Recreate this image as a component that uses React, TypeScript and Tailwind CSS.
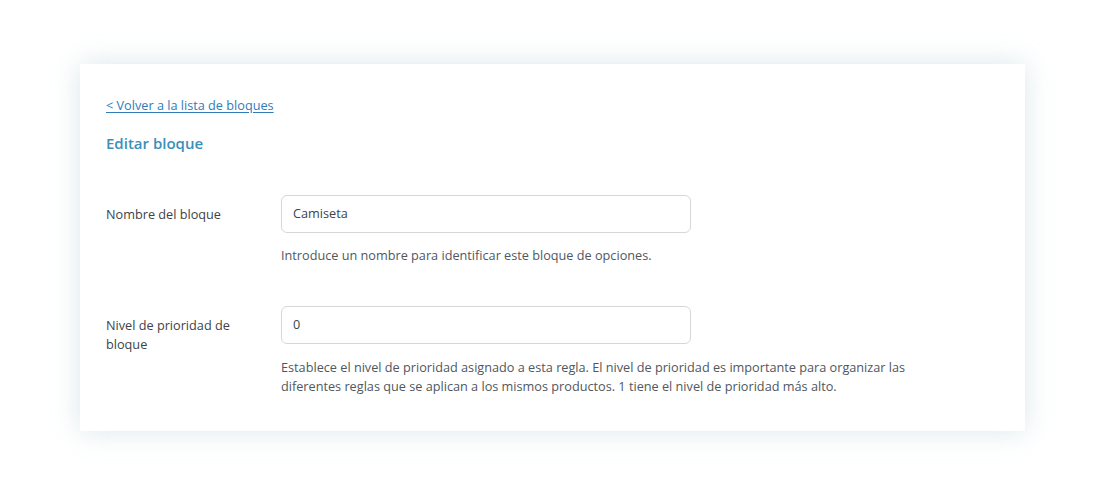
export default function App() {
  return (
    <div className="w-[1106px] h-[494px] bg-white pt-[64px] pl-[80px] font-['Open_Sans',sans-serif]">
      <div className="w-[945px] h-[367px] bg-white shadow-[0_0_26px_rgba(140,180,195,0.32)] pl-[26px] pt-[28px]">
        <a href="#" className="text-[12.7px] leading-[18px] text-[#2f7cbb] underline underline-offset-2">
          &lt; Volver a la lista de bloques
        </a>
        <h2 className="mt-[17px] text-[15px] leading-[20px] font-semibold text-[#3a90b8]">Editar bloque</h2>

        <div className="mt-[42px] flex">
          <div className="w-[175px] pt-[10px] text-[12.7px] leading-[19px] text-[#3c434a]">Nombre del bloque</div>
          <div>
            <div className="w-[410px] h-[38px] rounded-[6px] border border-[#d5d7da] flex items-center px-[11px] text-[12.7px] text-[#3c434a]">
              Camiseta
            </div>
            <p className="mt-[13px] text-[12.7px] leading-[19px] text-[#50575e]">
              Introduce un nombre para identificar este bloque de opciones.
            </p>
          </div>
        </div>

        <div className="mt-[41px] flex">
          <div className="w-[175px] pt-[10px] text-[12.7px] leading-[19px] text-[#3c434a] pr-[20px]">
            Nivel de prioridad de bloque
          </div>
          <div>
            <div className="w-[410px] h-[38px] rounded-[6px] border border-[#d5d7da] flex items-center px-[11px] text-[12.7px] text-[#3c434a]">
              0
            </div>
            <p className="mt-[14px] w-[640px] text-[12.7px] leading-[19px] text-[#50575e]">
              Establece el nivel de prioridad asignado a esta regla. El nivel de prioridad es importante para organizar las diferentes reglas que se aplican a los mismos productos. 1 tiene el nivel de prioridad más alto.
            </p>
          </div>
        </div>
      </div>
    </div>
  );
}
